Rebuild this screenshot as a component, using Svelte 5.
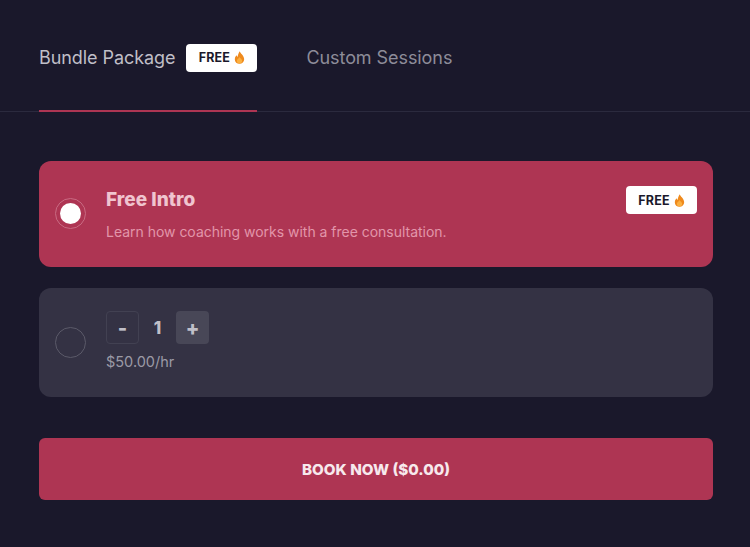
<script lang="ts">
  let qty = $state(1);
  let selected = $state("intro");
</script>

{#snippet freeBadge()}
  <span class="badge">
    FREE
    <svg class="flame" viewBox="0 0 12 15" width="11" height="13" aria-hidden="true">
      <path d="M6.300 .3C6.600 2.600 11.400 5.200 11.400 9.500c0 3.200-2.400 5.200-5.400 5.200S.6 12.700.6 9.700c0-2.200 1.100-3.800 2.200-4.700.1 1 .4 1.600 1 2C4.100 4.600 5 2.200 6.300 .3z" fill="#ef8a1d"/>
      <path d="M6.100 6.800c.4 1.400 3 2.500 3 4.600 0 1.700-1.400 2.800-3.100 2.800s-3.100-1.100-3.100-2.800c0-2.100 2.700-3.100 3.200-4.600z" fill="#fbb040"/>
    </svg>
  </span>
{/snippet}

<div class="page">
  <div class="tabs">
    <button class="tab active">
      <span>Bundle Package</span>
      {@render freeBadge()}
    </button>
    <button class="tab">
      <span>Custom Sessions</span>
    </button>
  </div>

  <div class="options">
    <div class="option intro" class:selected={selected === "intro"}>
      <button class="radio" class:on={selected === "intro"} aria-label="Free Intro" onclick={() => (selected = "intro")}></button>
      <div class="body">
        <div class="title">Free Intro</div>
        <div class="desc">Learn how coaching works with a free consultation.</div>
      </div>
      <div class="corner">{@render freeBadge()}</div>
    </div>

    <div class="option hourly">
      <button class="radio" class:on={selected === "hourly"} aria-label="Hourly" onclick={() => (selected = "hourly")}></button>
      <div class="body">
        <div class="stepper">
          <button class="step minus" onclick={() => (qty = Math.max(1, qty - 1))}>-</button>
          <span class="qty">{qty}</span>
          <button class="step plus" onclick={() => qty++}>+</button>
        </div>
        <div class="price">$50.00/hr</div>
      </div>
    </div>
  </div>

  <button class="book">BOOK NOW ($0.00)</button>
</div>

<style>
  :global(body) {
    margin: 0;
    background: #1a182b;
  }
  .page {
    height: 547px;
    background: #1a182b;
    font-family: "Inter", "Liberation Sans", sans-serif;
    box-sizing: border-box;
    overflow: hidden;
  }
  button {
    font-family: inherit;
    cursor: pointer;
  }
  .tabs {
    display: flex;
    gap: 49px;
    padding: 0 39px;
    height: 111px;
    border-bottom: 1px solid #2b2a3e;
  }
  .tab {
    display: flex;
    align-items: center;
    gap: 11px;
    height: 112px;
    padding: 5px 0 0;
    background: none;
    border: none;
    border-bottom: 2px solid transparent;
    box-sizing: border-box;
    font-size: 18px;
    letter-spacing: -0.07px;
    color: #8d8c99;
  }
  .tab.active {
    color: #c0bfc8;
    border-bottom-color: #ae3553;
  }
  .badge {
    display: inline-flex;
    align-items: center;
    gap: 4px;
    width: 71px;
    height: 28px;
    justify-content: center;
    box-sizing: border-box;
    background: #fff;
    border-radius: 4px;
    font-size: 12.5px;
    font-weight: 700;
    letter-spacing: 0.15px;
    color: #1a182b;
  }
  .flame {
    display: block;
  }
  .options {
    display: flex;
    flex-direction: column;
    gap: 21px;
    padding: 49px 37px 0 39px;
  }
  .option {
    position: relative;
    display: flex;
    align-items: center;
    gap: 20px;
    padding: 0 16px;
    border-radius: 12px;
    box-sizing: border-box;
  }
  .intro {
    height: 106px;
    background: #ae3553;
  }
  .hourly {
    height: 109px;
    background: #343244;
  }
  .radio {
    flex: none;
    width: 31px;
    height: 31px;
    padding: 0;
    border-radius: 50%;
    background: none;
    border: 1px solid #5b5a69;
    position: relative;
  }
  .intro .radio {
    margin-top: -2px;
  }
  .hourly .radio {
    margin-top: -1px;
  }
  .radio.on {
    border-color: #c96a82;
  }
  .radio.on::after {
    content: "";
    position: absolute;
    inset: 4px;
    border-radius: 50%;
    background: #fff;
  }
  .intro .body {
    padding-top: 2px;
  }
  .title {
    font-size: 19px;
    font-weight: 800;
    color: #f0c4cf;
    line-height: 22px;
  }
  .desc {
    margin-top: 11px;
    font-size: 14px;
    letter-spacing: -0.02px;
    color: #e295aa;
    line-height: 20px;
  }
  .corner {
    position: absolute;
    top: 25px;
    right: 16px;
  }
  .stepper {
    display: flex;
    align-items: center;
    margin-top: -2px;
  }
  .step {
    width: 33px;
    height: 33px;
    padding: 0;
    border-radius: 4px;
    font-size: 20px;
    font-weight: 800;
    color: #c0bfc8;
    box-sizing: border-box;
    line-height: 1;
  }
  .minus {
    background: none;
    border: 1px solid #424152;
  }
  .plus {
    background: #484757;
    border: none;
  }
  .qty {
    width: 37px;
    text-align: center;
    font-size: 17px;
    font-weight: 800;
    color: #c0bfc8;
  }
  .price {
    margin-top: 8px;
    font-size: 14.5px;
    color: #9b9aa6;
    line-height: 20px;
  }
  .book {
    display: block;
    margin: 41px 37px 0 39px;
    width: 674px;
    height: 62px;
    background: #ae3553;
    border: none;
    border-radius: 6px;
    font-size: 15.2px;
    font-weight: 800;
    color: #f7e9ed;
  }
</style>
